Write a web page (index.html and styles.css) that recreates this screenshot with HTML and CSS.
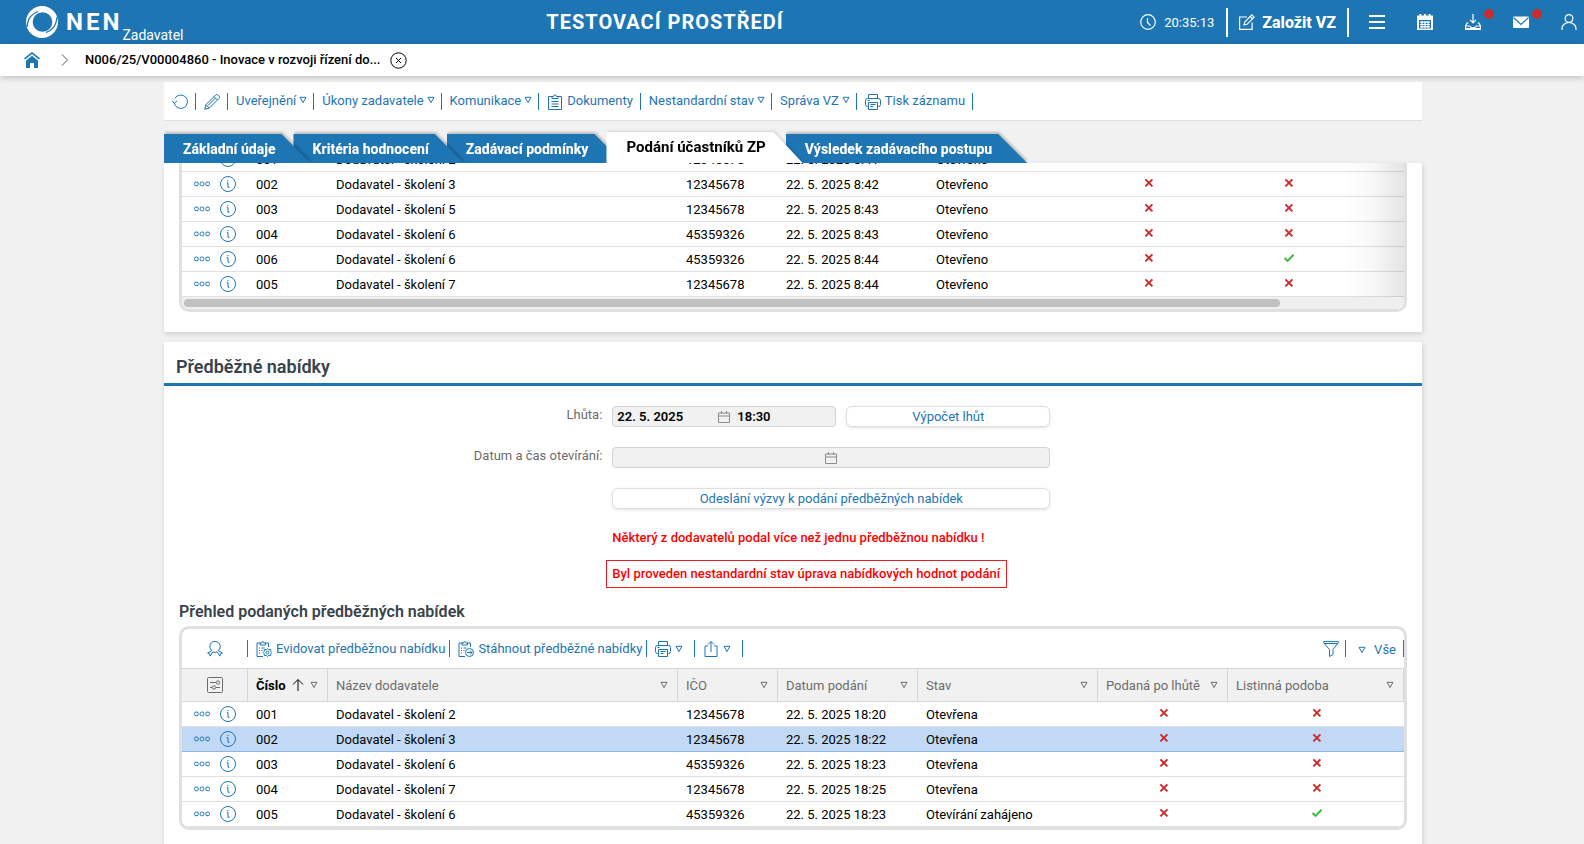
FILE: index.html
```
<!DOCTYPE html>
<html lang="cs">
<head>
    <meta charset="UTF-8">
    <meta name="viewport" content="width=device-width, initial-scale=1.0">
    <title>NEN - Podání účastníků ZP</title>
    <link rel="stylesheet" href="styles.css">
</head>
<body>
    <!-- Ikony -->
    <svg class="sprite" aria-hidden="true">
        <symbol id="i-tri" viewBox="0 0 8 8"><path d="M1 1.3h6L4 6.6z"/></symbol>
        <symbol id="i-dots" viewBox="0 0 16 16"><rect x=".6" y="6.1" width="3.6" height="3.6" rx="1.2"/><rect x="6.2" y="6.1" width="3.6" height="3.6" rx="1.2"/><rect x="11.8" y="6.1" width="3.6" height="3.6" rx="1.2"/></symbol>
        <symbol id="i-info" viewBox="0 0 16 16"><circle cx="8" cy="8" r="7.5"/><path d="M6.7 6.7H8v4.6h1.5M7.8 4v1.2"/></symbol>
        <symbol id="i-x" viewBox="0 0 10 10"><path d="M1.4 1.4l7 7M8.4 1.4l-7 7"/></symbol>
        <symbol id="i-ok" viewBox="0 0 10 10"><path d="M.6 5l2.9 2.9L9.6 1.8"/></symbol>
        <symbol id="i-print" viewBox="0 0 16 16"><path d="M3.5 4.5v-4h9v4M3.5 12.500h-1a2 2 0 0 1-2-2v-4a2 2 0 0 1 2-2h11a2 2 0 0 1 2 2v4a2 2 0 0 1-2 2h-1M3.500 8.500h9v7h-9zM5.500 10.500h5M5.500 12.500h3M2.500 6.500h2"/></symbol>
        <symbol id="i-cal" viewBox="0 0 12 12"><path d="M.5 2h11v9.500H.5zM.5 5h11M3.500 0v3M8.500 0v3"/></symbol>
    </svg>

    <header class="topbar">
        <a href="#" class="logo">
            <svg class="logo-mark" viewBox="0 0 32 32"><path fill="#fff" fill-rule="evenodd" d="M16 0a16 16 0 1 1 0 32a16 16 0 0 1 0-32zM16.500 6.200a9.600 9.600 0 1 0 0 19.600a9.600 9.600 0 0 0 0-19.600z"/><path d="M1 21C2 12 5 8 12 5.500M31 11C30 20 27 24 20 26.500" fill="none" stroke="#1e75b3" stroke-width="1.300"/></svg>
            <span class="logo-name">NEN</span>
            <span class="logo-role">Zadavatel</span>
        </a>
        <div class="env">TESTOVACÍ PROSTŘEDÍ</div>
        <div class="top-right">
            <svg class="icon" viewBox="0 0 16 16"><circle cx="8" cy="8" r="7.300"/><path d="M7.500 4v4.500l3 3"/></svg>
            <span class="clock">20:35:13</span>
            <button class="create">
                <svg class="icon" viewBox="0 0 16 16"><path d="M8 3H.6v12.400h12.500V8.500M5 11l.8-3L12.800.9l2.300 2.300L8 10.300zM11.200 2.500l2.300 2.300"/></svg>
                Založit VZ
            </button>
            <button class="top-btn" aria-label="Menu"><svg class="icon" viewBox="0 0 16 16"><path stroke-width="2" d="M0 2h16M0 8h16M0 14h16"/></svg></button>
            <button class="top-btn" aria-label="Kalendář"><svg class="icon" viewBox="0 0 16 16"><path fill="#fff" stroke="none" fill-rule="evenodd" d="M0 1.500h2.500V0h1.800v1.500h2.800V0h1.800v1.500h2.800V0h1.800v1.500H16V16H0zM2 6h12v8.500H2z"/><path d="M3 8.200h10M3 10.500h10M3 12.800h10M5 7v7M8 7v7M11 7v7"/></svg></button>
            <button class="top-btn" aria-label="Stahování"><svg class="icon" viewBox="0 0 16 16"><path d="M8 0v8.500M5 5.800l3 3 3-3M3.500 9H2L.6 12v3.400h14.800V12L14 9h-1.500M.6 12h4l1.500 1.500h3.800l1.500-1.500h4M1 14.500h14"/></svg><i class="dot"></i></button>
            <button class="top-btn" aria-label="Zprávy"><svg class="icon" viewBox="0 0 16 16"><rect x="0" y="2.500" width="16" height="11.500" rx="1" fill="#fff" stroke="none"/><path stroke="#1e75b3" d="M.5 3.500L8 10.500l7.500-7"/></svg><i class="dot"></i></button>
            <button class="top-btn user" aria-label="Uživatel"><svg class="icon" viewBox="0 0 16 16"><circle cx="8" cy="4.500" r="3.900"/><path d="M1 16v-1.500a7 6 0 0 1 14 0V16"/></svg></button>
        </div>
    </header>

    <nav class="breadcrumb">
        <a href="#" class="home" aria-label="Domů"><svg class="icon" viewBox="0 0 16 16"><path fill="#1e75b3" stroke="none" d="M8 0l8 6.300-1 1.300-7-5.500-7 5.500L0 6.300zM8 3.800l6 4.700V16h-4v-5H6v5H2V8.500z"/></svg></a>
        <svg class="chevron" viewBox="0 0 8 12"><path d="M1 .5L6.500 6 1 11.500"/></svg>
        <span class="crumb">N006/25/V00004860 - Inovace v rozvoji řízení do...</span>
        <button class="close" aria-label="Zavřít"><svg viewBox="0 0 17 17"><circle cx="8.500" cy="8.500" r="7.700"/><path d="M6 6l5 5M11 6l-5 5"/></svg></button>
    </nav>

    <main class="page">
        <div class="toolbar actions">
            <button class="tool" aria-label="Obnovit"><svg class="icon" viewBox="0 0 16 16"><path d="M2.200 9a6.700 6.700 0 1 0 .7-4.500M0 6.500l2.200 2.700L5 7"/></svg></button>
            <button class="tool" aria-label="Upravit"><svg class="icon" viewBox="0 0 16 16"><path d="M.7 15.300l1.200-4.600L11.700.9a1.400 1.400 0 0 1 2 0l1.400 1.400a1.400 1.400 0 0 1 0 2L5.300 14.100zM1.900 10.700l3.400 3.400M10 2.600L13.400 6M4 11.500l7.500-7.500"/></svg></button>
            <button class="tool menu">Uveřejnění <svg class="tri"><use href="#i-tri"/></svg></button>
            <button class="tool menu">Úkony zadavatele <svg class="tri"><use href="#i-tri"/></svg></button>
            <button class="tool menu">Komunikace <svg class="tri"><use href="#i-tri"/></svg></button>
            <button class="tool"><svg class="icon" viewBox="0 0 16 16"><path d="M5 2.500H1.500v13h13v-13H11M5 4.500v-2h1.500a1.500 1.500 0 0 1 3 0H11v2zM4.500 7.500h7M4.500 10h7M4.500 12.500h7"/></svg>Dokumenty</button>
            <button class="tool menu">Nestandardní stav <svg class="tri"><use href="#i-tri"/></svg></button>
            <button class="tool menu">Správa VZ <svg class="tri"><use href="#i-tri"/></svg></button>
            <button class="tool"><svg class="icon"><use href="#i-print"/></svg>Tisk záznamu</button>
        </div>

        <div class="tabs">
            <a href="#" class="tab">Základní údaje</a>
            <a href="#" class="tab">Kritéria hodnocení</a>
            <a href="#" class="tab">Zadávací podmínky</a>
            <a href="#" class="tab active">Podání účastníků ZP</a>
            <a href="#" class="tab">Výsledek zadávacího postupu</a>
        </div>

        <!-- Seznam podání (odrolovaný) -->
        <section class="card scrolled">
            <div class="frame">
                <table class="grid">
                    <colgroup><col class="c-act"><col class="c-num"><col class="c-name"><col class="c-ico"><col class="c-date-wide"><col class="c-state-narrow"><col class="c-flag"><col class="c-flag"><col></colgroup>
                    <tbody>
                        <tr>
                            <td class="act"><button aria-label="Akce"><svg class="icon"><use href="#i-dots"/></svg></button><button aria-label="Detail"><svg class="icon"><use href="#i-info"/></svg></button></td>
                            <td>001</td><td>Dodavatel - školení 2</td><td>12345678</td><td>22. 5. 2025 8:41</td><td>Otevřeno</td>
                            <td class="flag"></td><td class="flag"></td><td></td>
                        </tr>
                        <tr>
                            <td class="act"><button aria-label="Akce"><svg class="icon"><use href="#i-dots"/></svg></button><button aria-label="Detail"><svg class="icon"><use href="#i-info"/></svg></button></td>
                            <td>002</td><td>Dodavatel - školení 3</td><td>12345678</td><td>22. 5. 2025 8:42</td><td>Otevřeno</td>
                            <td class="flag"><svg class="no"><use href="#i-x"/></svg></td><td class="flag"><svg class="no"><use href="#i-x"/></svg></td><td></td>
                        </tr>
                        <tr>
                            <td class="act"><button aria-label="Akce"><svg class="icon"><use href="#i-dots"/></svg></button><button aria-label="Detail"><svg class="icon"><use href="#i-info"/></svg></button></td>
                            <td>003</td><td>Dodavatel - školení 5</td><td>12345678</td><td>22. 5. 2025 8:43</td><td>Otevřeno</td>
                            <td class="flag"><svg class="no"><use href="#i-x"/></svg></td><td class="flag"><svg class="no"><use href="#i-x"/></svg></td><td></td>
                        </tr>
                        <tr>
                            <td class="act"><button aria-label="Akce"><svg class="icon"><use href="#i-dots"/></svg></button><button aria-label="Detail"><svg class="icon"><use href="#i-info"/></svg></button></td>
                            <td>004</td><td>Dodavatel - školení 6</td><td>45359326</td><td>22. 5. 2025 8:43</td><td>Otevřeno</td>
                            <td class="flag"><svg class="no"><use href="#i-x"/></svg></td><td class="flag"><svg class="no"><use href="#i-x"/></svg></td><td></td>
                        </tr>
                        <tr>
                            <td class="act"><button aria-label="Akce"><svg class="icon"><use href="#i-dots"/></svg></button><button aria-label="Detail"><svg class="icon"><use href="#i-info"/></svg></button></td>
                            <td>006</td><td>Dodavatel - školení 6</td><td>45359326</td><td>22. 5. 2025 8:44</td><td>Otevřeno</td>
                            <td class="flag"><svg class="no"><use href="#i-x"/></svg></td><td class="flag"><svg class="yes"><use href="#i-ok"/></svg></td><td></td>
                        </tr>
                        <tr>
                            <td class="act"><button aria-label="Akce"><svg class="icon"><use href="#i-dots"/></svg></button><button aria-label="Detail"><svg class="icon"><use href="#i-info"/></svg></button></td>
                            <td>005</td><td>Dodavatel - školení 7</td><td>12345678</td><td>22. 5. 2025 8:44</td><td>Otevřeno</td>
                            <td class="flag"><svg class="no"><use href="#i-x"/></svg></td><td class="flag"><svg class="no"><use href="#i-x"/></svg></td><td></td>
                        </tr>
                    </tbody>
                </table>
                <div class="fade"></div>
                <div class="scrollbar"><div class="thumb"></div></div>
            </div>
        </section>

        <!-- Předběžné nabídky -->
        <section class="card offers">
            <h2>Předběžné nabídky</h2>
            <div class="form">
                <label for="deadline">Lhůta:</label>
                <div class="field-row">
                    <div class="datebox split">
                        <input id="deadline" type="text" value="22. 5. 2025" readonly>
                        <svg class="cal"><use href="#i-cal"/></svg>
                        <input type="text" value="18:30" aria-label="Čas" readonly>
                    </div>
                    <button class="btn">Výpočet lhůt</button>
                </div>
                <label for="opening">Datum a čas otevírání:</label>
                <div class="datebox">
                    <input id="opening" type="text" readonly>
                    <svg class="cal"><use href="#i-cal"/></svg>
                    <input type="text" aria-label="Čas otevírání" readonly>
                </div>
                <button class="btn wide">Odeslání výzvy k podání předběžných nabídek</button>
                <p class="warn">Některý z dodavatelů podal více než jednu předběžnou nabídku !</p>
                <p class="warn boxed">Byl proveden nestandardní stav úprava nabídkových hodnot podání</p>
            </div>

            <h3>Přehled podaných předběžných nabídek</h3>
            <div class="frame">
                <div class="toolbar list-tools">
                    <button class="tool first" aria-label="Certifikát"><svg class="icon" viewBox="0 0 16 16"><path d="M4.800 9.600A5.200 5.200 0 1 1 11.200 9.600L15.400 12l-1.900.8-.6 2.300-2.600-4.200a5.200 5.200 0 0 1-4.600 0l-2.600 4.200-.6-2.300L.6 12z"/></svg></button>
                    <button class="tool"><svg class="icon" viewBox="0 0 16 16"><path d="M4.500 2H1v13.500h6M9 2h3.500v4M4 4V2h1.500a1.300 1.300 0 0 1 2.600 0H9.500v2zM3 7h1M5.500 7h3M3 9.500h1M5.500 9.500h1M3 12h1"/><circle cx="11.500" cy="11.500" r="1.400"/><path d="M11.500 7.500l1.200 1.300 2-.3.1 1.900 1 1.100-1 1.200-.1 1.900-2-.3-1.200 1.300-1.200-1.300-2 .3-.1-1.900-1-1.200 1-1.100.1-1.900 2 .3z"/></svg>Evidovat předběžnou nabídku</button>
                    <button class="tool"><svg class="icon" viewBox="0 0 16 16"><path d="M4.500 2H1v13.500h6M9 2h3.500v4M4 4V2h1.500a1.300 1.300 0 0 1 2.600 0H9.500v2zM3 7h1M5.500 7h3M3 9.500h1M5.500 9.500h1M3 12h1"/><circle cx="11.500" cy="11.500" r="4"/><path d="M9 11.500h5M12 9.500l2 2-2 2"/></svg>Stáhnout předběžné nabídky</button>
                    <button class="tool drop" aria-label="Tisk"><svg class="icon"><use href="#i-print"/></svg><svg class="tri"><use href="#i-tri"/></svg></button>
                    <button class="tool drop" aria-label="Export"><svg class="icon" viewBox="0 0 16 16"><path d="M5 5H2v10.500h12V5h-3M8 11V.8M5 3.500l3-3 3 3"/></svg><svg class="tri"><use href="#i-tri"/></svg></button>
                    <button class="tool filter" aria-label="Filtr"><svg class="icon" viewBox="0 0 16 16"><path d="M.6.6h14.800v1.200L10 8.500v5l-3.500 2v-7L.6 1.800zM1 2.500h14"/></svg></button>
                    <button class="tool view"><svg class="tri"><use href="#i-tri"/></svg>Vše</button>
                </div>
                <table class="grid">
                    <colgroup><col class="c-act"><col class="c-num"><col class="c-name"><col class="c-ico"><col class="c-date"><col class="c-state"><col class="c-late"><col></colgroup>
                    <thead>
                        <tr>
                            <th class="settings"><svg class="icon" viewBox="0 0 16 16"><rect x=".5" y=".5" width="15" height="15" rx="1"/><path d="M3 5.500h6M3 10.500h2M9 10.500h4"/><circle cx="11" cy="5.500" r="1.700"/><circle cx="7" cy="10.500" r="1.700"/></svg></th>
                            <th class="sorted"><div>Číslo <svg class="arrow" viewBox="0 0 12 12"><path d="M6 12V.8M1 5.500l5-5 5 5"/></svg><svg class="tri"><use href="#i-tri"/></svg></div></th>
                            <th><div>Název dodavatele <svg class="tri"><use href="#i-tri"/></svg></div></th>
                            <th><div>IČO <svg class="tri"><use href="#i-tri"/></svg></div></th>
                            <th><div>Datum podání <svg class="tri"><use href="#i-tri"/></svg></div></th>
                            <th><div>Stav <svg class="tri"><use href="#i-tri"/></svg></div></th>
                            <th><div>Podaná po lhůtě <svg class="tri"><use href="#i-tri"/></svg></div></th>
                            <th><div>Listinná podoba <svg class="tri"><use href="#i-tri"/></svg></div></th>
                        </tr>
                    </thead>
                    <tbody>
                        <tr>
                            <td class="act"><button aria-label="Akce"><svg class="icon"><use href="#i-dots"/></svg></button><button aria-label="Detail"><svg class="icon"><use href="#i-info"/></svg></button></td>
                            <td>001</td><td>Dodavatel - školení 2</td><td>12345678</td><td>22. 5. 2025 18:20</td><td>Otevřena</td>
                            <td class="flag"><svg class="no"><use href="#i-x"/></svg></td><td class="flag"><svg class="no"><use href="#i-x"/></svg></td>
                        </tr>
                        <tr class="selected">
                            <td class="act"><button aria-label="Akce"><svg class="icon"><use href="#i-dots"/></svg></button><button aria-label="Detail"><svg class="icon"><use href="#i-info"/></svg></button></td>
                            <td>002</td><td>Dodavatel - školení 3</td><td>12345678</td><td>22. 5. 2025 18:22</td><td>Otevřena</td>
                            <td class="flag"><svg class="no"><use href="#i-x"/></svg></td><td class="flag"><svg class="no"><use href="#i-x"/></svg></td>
                        </tr>
                        <tr>
                            <td class="act"><button aria-label="Akce"><svg class="icon"><use href="#i-dots"/></svg></button><button aria-label="Detail"><svg class="icon"><use href="#i-info"/></svg></button></td>
                            <td>003</td><td>Dodavatel - školení 6</td><td>45359326</td><td>22. 5. 2025 18:23</td><td>Otevřena</td>
                            <td class="flag"><svg class="no"><use href="#i-x"/></svg></td><td class="flag"><svg class="no"><use href="#i-x"/></svg></td>
                        </tr>
                        <tr>
                            <td class="act"><button aria-label="Akce"><svg class="icon"><use href="#i-dots"/></svg></button><button aria-label="Detail"><svg class="icon"><use href="#i-info"/></svg></button></td>
                            <td>004</td><td>Dodavatel - školení 7</td><td>12345678</td><td>22. 5. 2025 18:25</td><td>Otevřena</td>
                            <td class="flag"><svg class="no"><use href="#i-x"/></svg></td><td class="flag"><svg class="no"><use href="#i-x"/></svg></td>
                        </tr>
                        <tr>
                            <td class="act"><button aria-label="Akce"><svg class="icon"><use href="#i-dots"/></svg></button><button aria-label="Detail"><svg class="icon"><use href="#i-info"/></svg></button></td>
                            <td>005</td><td>Dodavatel - školení 6</td><td>45359326</td><td>22. 5. 2025 18:23</td><td>Otevírání zahájeno</td>
                            <td class="flag"><svg class="no"><use href="#i-x"/></svg></td><td class="flag"><svg class="yes"><use href="#i-ok"/></svg></td>
                        </tr>
                    </tbody>
                </table>
            </div>
        </section>
    </main>
</body>
</html>
```
FILE: styles.css
```
* {
    box-sizing: border-box;
}

body {
    margin: 0;
    height: 100vh;
    overflow: hidden;
    display: flex;
    flex-direction: column;
    background: #f1f1f1;
    font-family: Roboto, "Liberation Sans", sans-serif;
    font-size: 13px;
    color: #000;
}

button {
    margin: 0;
    padding: 0;
    border: 0;
    background: none;
    font: inherit;
    color: inherit;
    cursor: pointer;
}

a {
    color: inherit;
    text-decoration: none;
}

svg {
    display: block;
    flex: none;
    fill: none;
    stroke: currentColor;
}

.sprite {
    position: absolute;
    width: 0;
    height: 0;
}

.icon {
    width: 16px;
    height: 16px;
}

.tri {
    width: 8px;
    height: 8px;
}

/* Horní lišta */
.topbar {
    flex: none;
    height: 44px;
    display: grid;
    grid-template-columns: 1fr auto 1fr;
    align-items: center;
    background: #1e75b3;
    color: #fff;
}

.logo {
    display: flex;
    align-items: center;
    height: 44px;
    padding-left: 26px;
}

.logo-mark {
    width: 32px;
    height: 32px;
    stroke: none;
}

.logo-name {
    margin-left: 8px;
    font-size: 24px;
    font-weight: 700;
    letter-spacing: 3px;
}

.logo-role {
    align-self: flex-end;
    padding-bottom: 1px;
    font-size: 14px;
}

.env {
    padding-right: 254px;
    font-size: 20px;
    font-weight: 700;
    letter-spacing: 1px;
}

.top-right {
    display: flex;
    align-items: center;
    justify-content: flex-end;
    white-space: nowrap;
}

.top-right .icon {
    stroke-width: 1.2;
}

.clock {
    margin: 0 12px 0 8px;
}

.create {
    display: flex;
    align-items: center;
    gap: 7px;
    height: 29px;
    padding: 0 11px;
    border: solid #fff;
    border-width: 0 2px;
    font-size: 16px;
    font-weight: 800;
}

.top-btn {
    position: relative;
    width: 48px;
    padding-left: 20px;
}

.top-btn.user {
    width: 43px;
}

.dot {
    position: absolute;
    top: -5px;
    right: -1px;
    width: 10px;
    height: 10px;
    border-radius: 50%;
    background: #cc2b2b;
}

/* Drobečková navigace */
.breadcrumb {
    flex: none;
    height: 32px;
    display: flex;
    align-items: center;
    padding-left: 24px;
    background: #fff;
    box-shadow: 0 2px 6px rgba(0, 0, 0, 0.2);
}

.chevron {
    width: 8px;
    height: 12px;
    margin: 0 16px 0 21px;
    stroke: #555;
}

.crumb {
    font-weight: 500;
    line-height: 16px;
}

.close {
    margin-left: 10px;
}

.close svg {
    width: 17px;
    height: 17px;
}

/* Obsah */
.page {
    flex: 1;
    min-height: 0;
    display: flex;
    flex-direction: column;
    margin: 0 162px 0 164px;
    padding-top: 6px;
}

.toolbar {
    display: flex;
    align-items: center;
    color: #1e75b3;
}

.actions {
    flex: none;
    height: 39px;
    background: #fff;
    border-bottom: 1px solid #dedede;
}

.tool {
    display: flex;
    align-items: center;
    gap: 4px;
    height: 17px;
    padding: 0 7px 0 8px;
    border-right: 1px solid #1e75b3;
    white-space: nowrap;
}

.actions .tool {
    padding-bottom: 2px;
}

.actions .icon {
    margin-top: 3px;
}

.menu {
    gap: 3px;
    padding-right: 6px;
}

.tabs {
    flex: none;
    position: relative;
    z-index: 0;
    display: flex;
    align-items: flex-end;
    height: 42px;
    overflow: hidden;
    color: #fff;
    font-size: 14px;
    font-weight: 800;
}

.tab {
    position: relative;
    height: 29px;
    padding: 0 18px 0 19px;
    line-height: 31px;
    white-space: nowrap;
    filter: drop-shadow(1px -2px 1px rgba(0, 0, 0, 0.2));
}

.tab::before {
    content: "";
    position: absolute;
    z-index: -1;
    inset: 0 -17px 0 0;
    background: #1e75b3;
    clip-path: polygon(0 0, calc(100% - 29px) 0, 100% 100%, 0 100%);
}

.tab:nth-child(1) { z-index: 4; }
.tab:nth-child(2) { z-index: 3; }
.tab:nth-child(3) { z-index: 2; }

.tab.active {
    z-index: 5;
    height: 31px;
    padding: 0 20px;
    color: #000;
    font-size: 15px;
    font-weight: 700;
    filter: drop-shadow(1px -1px 1px rgba(0, 0, 0, 0.12));
}

.tab.active::before {
    background: #fff;
}

.card {
    background: #fff;
    box-shadow: 1px 2px 5px rgba(0, 0, 0, 0.15);
}

.frame {
    position: relative;
    margin: 0 15px;
    border: 3px solid #dfe0e1;
    border-radius: 10px;
    overflow: hidden;
}

.scrolled {
    flex: none;
    overflow: hidden;
    padding-bottom: 20px;
}

.scrolled .frame {
    margin-top: -19px;
}

.fade {
    position: absolute;
    top: 0;
    right: 0;
    bottom: 12px;
    width: 60px;
    background: linear-gradient(to right, rgba(0, 0, 0, 0), rgba(0, 0, 0, 0.03) 50%, rgba(0, 0, 0, 0.1));
}

.scrollbar {
    height: 12px;
    padding: 2px;
    background: #efefef;
}

.thumb {
    width: 90%;
    height: 8px;
    border-radius: 4px;
    background: #c1c1c1;
}

/* Tabulky */
.grid {
    width: 100%;
    table-layout: fixed;
    border-collapse: separate;
    border-spacing: 0;
}

.c-act { width: 66px; }
.c-num { width: 80px; }
.c-name { width: 350px; }
.c-ico { width: 100px; }
.c-date, .c-flag { width: 140px; }
.c-date-wide, .c-state-narrow { width: 150px; }
.c-state { width: 180px; }
.c-late { width: 130px; }

.grid td {
    height: 25px;
    padding: 2px 8px 0;
    border-bottom: 1px solid #dfe0e1;
    line-height: 16px;
    white-space: nowrap;
}

.grid .act {
    padding: 0 0 0 12px;
    color: #1e75b3;
    font-size: 0;
    line-height: 0;
}

.act button {
    vertical-align: middle;
}

.act button + button {
    margin-left: 10px;
}

.grid .flag {
    padding: 0 7px 0 9px;
}

.flag svg {
    width: 10px;
    height: 10px;
    margin: -3px auto 0;
    stroke-width: 2;
}

.no {
    color: #cc2b2b;
}

.yes {
    color: #3bbb3b;
}

.grid th {
    height: 34px;
    padding: 0 9px 0 8px;
    background: #f1f1f1;
    border: solid #d5d6d7;
    border-width: 1px 1px 1px 0;
    color: #6c6c6c;
    font-weight: 400;
    text-align: left;
    white-space: nowrap;
}

.grid th div {
    display: flex;
    align-items: center;
    justify-content: space-between;
}

.grid .settings {
    padding: 0 0 0 25px;
}

.grid .sorted {
    color: #000;
    font-weight: 700;
}

.sorted .arrow {
    width: 12px;
    height: 12px;
}

.sorted .tri {
    color: #6c6c6c;
}

.selected td {
    background: #c2d9f5;
    border-bottom-color: #8cb8ea;
}

/* Sekce nabídek */
.offers {
    flex: none;
    margin-top: 10px;
    padding-bottom: 40px;
}

h2 {
    height: 44px;
    margin: 0;
    padding-left: 12px;
    border-bottom: 3px solid #1e75b3;
    color: #3a434b;
    font-size: 18px;
    font-weight: 600;
    line-height: 50px;
}

.form {
    display: grid;
    grid-template-columns: 35% 438px;
    column-gap: 8px;
    padding-top: 20px;
}

.form label {
    height: 41px;
    padding-right: 2px;
    color: #6c6c6c;
    line-height: 18px;
    text-align: right;
}

.field-row {
    display: flex;
    align-items: flex-start;
    gap: 10px;
}

.datebox {
    display: flex;
    align-items: center;
    gap: 7px;
    width: 100%;
    height: 21px;
    padding-right: 4px;
    border: 1px solid #d3d3d3;
    border-radius: 4px;
    background: #f1f1f1;
}

.split {
    width: 224px;
}

.datebox input {
    flex: 1;
    min-width: 0;
    height: 19px;
    padding: 0 0 0 4px;
    border: 0;
    outline: 0;
    background: none;
    font: 600 13px Roboto, "Liberation Sans", sans-serif;
}

.datebox .cal + input {
    padding-left: 0;
}

.cal {
    width: 12px;
    height: 12px;
    color: #8c8c8c;
}

.btn {
    width: 204px;
    height: 21px;
    border: 1px solid #dfe0e1;
    border-radius: 6px;
    background: #fff;
    box-shadow: 0 1px 3px rgba(0, 0, 0, 0.12);
    color: #1e75b3;
}

.wide {
    grid-column: 2;
    width: 100%;
}

.warn {
    grid-column: 2;
    margin: 20px 0 14px;
    color: #f00;
    font-weight: 500;
    line-height: 17px;
}

.boxed {
    justify-self: start;
    margin: 0 0 0 -6px;
    padding: 4px 6px 5px 5px;
    border: 1px solid #ea1c24;
}

h3 {
    margin: 14px 15px 4px;
    color: #3a434b;
    font-size: 16px;
    font-weight: 600;
    line-height: 20px;
}

.list-tools {
    height: 39px;
}

.list-tools .tool {
    padding-right: 4px;
}

.list-tools .first {
    width: 66px;
    padding: 0;
    justify-content: center;
}

.list-tools .drop {
    width: 48px;
}

.list-tools .filter {
    margin-left: auto;
    padding-right: 6px;
}

.list-tools .view {
    gap: 8px;
    padding: 2px 7px 0 12px;
}
```
